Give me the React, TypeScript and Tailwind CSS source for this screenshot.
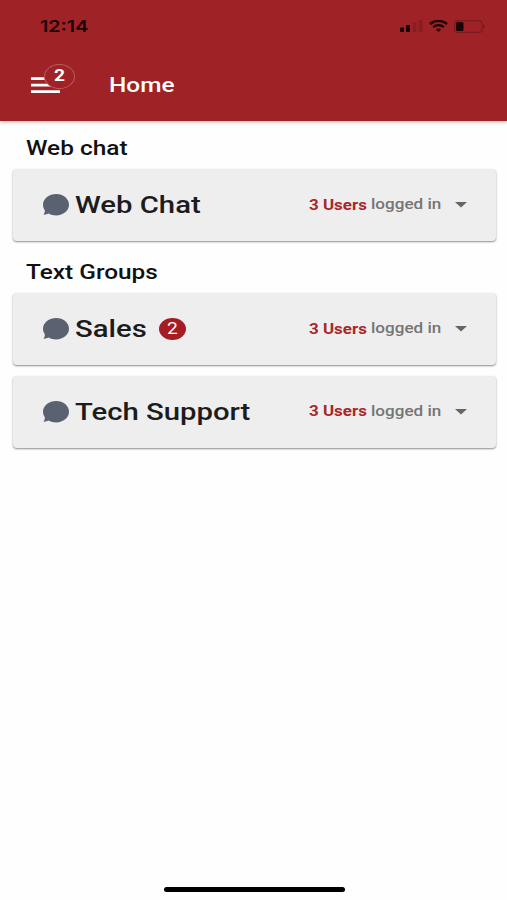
import type { ReactNode } from "react";

type Group = { name: string; users: number; unread?: number };

const webChats: Group[] = [{ name: "Web Chat", users: 3 }];

const textGroups: Group[] = [
  { name: "Sales", users: 3, unread: 2 },
  { name: "Tech Support", users: 3 },
];

function StatusBar() {
  return (
    <div className="flex h-[52px] items-center justify-between pl-10 pr-[21px]">
      <span className="origin-left scale-x-[1.23] font-['Inter',sans-serif] text-base font-semibold text-[#1c0305]">
        12:14
      </span>
      <div className="flex items-center">
        <svg width="23" height="12" viewBox="0 0 23 12">
          <rect x="0" y="7.5" width="4" height="4.5" rx="0.8" fill="#1c0305" />
          <rect x="6" y="5" width="4" height="7" rx="0.8" fill="#1c0305" />
          <rect x="12.5" y="2.5" width="4" height="9.5" rx="0.8" fill="#8a1d22" />
          <rect x="18.5" y="0" width="4" height="12" rx="0.8" fill="#8a1d22" />
        </svg>
        <svg className="ml-[6px]" width="19" height="12" viewBox="0 0 19 12" fill="none" stroke="#1c0305">
          <path d="M1 4C5.7-.2 13.3-.2 18 4" strokeWidth="2.5" />
          <path d="M4.2 7.1C7.2 4.5 11.8 4.5 14.8 7.1" strokeWidth="2.2" />
          <path d="M6.9 9.5Q9.5 7.4 12.1 9.5L9.500 12Z" fill="#1c0305" stroke="none" />
        </svg>
        <svg className="ml-[6px]" width="32" height="13" viewBox="0 0 32 13">
          <rect x="0.6" y="0.6" width="27.4" height="11.8" rx="3" fill="none" stroke="#7c1a1f" strokeWidth="1.1" />
          <rect x="2" y="2" width="7.5" height="9" rx="1.5" fill="#1c0305" />
          <path d="M29.5 4.3Q31.7 6.5 29.5 8.7Z" fill="#5c1216" />
        </svg>
      </div>
    </div>
  );
}

function Header() {
  return (
    <header className="h-[121px] bg-[#9f2226] shadow-[0_1px_4px_rgba(0,0,0,0.3)]">
      <StatusBar />
      <div className="flex h-[66px] items-center pl-[31px]">
        <button className="relative w-[29px]" aria-label="Menu">
          <svg width="29" height="17" viewBox="0 0 29 17" fill="#ffffff">
            <path d="M0 .2h29v2.700H0zM0 6.700h29v2.700H0zM0 13.200h29v2.700H0z" />
          </svg>
          <span className="absolute -top-[13px] left-[13px] flex h-[25px] w-[31px] items-center justify-center rounded-[50%] border border-[#bd5c60] bg-[#9f2226]">
            <span className="scale-x-[1.2] text-[16px] leading-none font-bold text-white">2</span>
          </span>
        </button>
        <h1 className="ml-[48.500px] origin-left scale-x-[1.22] text-[20px] font-medium text-white">Home</h1>
      </div>
    </header>
  );
}

function GroupCard({ name, users, unread }: Group) {
  return (
    <article className="flex h-[72px] items-center rounded-[4px] bg-[#eeeeee] pl-[30px] pr-[29px] shadow-[0_1px_2px_rgba(0,0,0,0.45)]">
      <svg width="26" height="22" viewBox="0 0 26 22" fill="#5a6170">
        <path d="M13.200.1C20.200.1 26 4.800 26 10.700S20.200 21.400 13.200 21.400C10.500 21.400 7.500 20.900 5.400 19.600C3.800 20.600 2.200 20.700.4 20.600C1.400 19.400 2 18 1.800 16.200C.7 14.600 0 12.900 0 10.700C0 4.800 6.200.1 13.200.1z" />
      </svg>
      <h3 className="ml-[6.500px] origin-left scale-x-[1.22] text-[24px] font-medium whitespace-nowrap text-[#1c1c1c]">{name}</h3>
      {unread && (
        <span className="ml-[25.500px] flex h-[22px] w-[27px] items-center justify-center rounded-[50%] bg-[#a31d23]">
          <span className="scale-x-[1.2] text-[16px] leading-none text-white">{unread}</span>
        </span>
      )}
      <div className="ml-auto flex items-center text-[14px] whitespace-nowrap">
        <span className="w-[62px]">
          <span className="inline-block origin-left scale-x-[1.21] font-bold text-[#a9262c]">{users} Users</span>
        </span>
        <span className="w-[84px] pb-px">
          <span className="inline-block origin-left scale-x-[1.22] font-medium text-[#757575]">logged in</span>
        </span>
        <svg width="12" height="6" viewBox="0 0 12 6" fill="#666666">
          <path d="M0 0h12L6 5.500z" />
        </svg>
      </div>
    </article>
  );
}

function Section({ title, children }: { title: string; children: ReactNode }) {
  return (
    <section>
      <h2 className="flex h-[42px] items-center pl-[13px] text-[20px] font-medium text-[#111111]">
        <span className="origin-left scale-x-[1.22]">{title}</span>
      </h2>
      <div className="flex flex-col gap-[10.500px]">{children}</div>
    </section>
  );
}

export default function App() {
  return (
    <div className="flex h-[900px] w-[507px] flex-col overflow-hidden bg-[#fefefe] font-['Roboto',sans-serif]">
      <Header />
      <main className="flex flex-1 flex-col gap-[10px] pt-[6px] pr-[11.500px] pl-[12.500px]">
        <Section title="Web chat">
          {webChats.map((group) => (
            <GroupCard key={group.name} {...group} />
          ))}
        </Section>
        <Section title="Text Groups">
          {textGroups.map((group) => (
            <GroupCard key={group.name} {...group} />
          ))}
        </Section>
      </main>
      <div className="mb-[8px] ml-[163.500px] h-[5px] w-[181px] rounded-full bg-black" />
    </div>
  );
}
